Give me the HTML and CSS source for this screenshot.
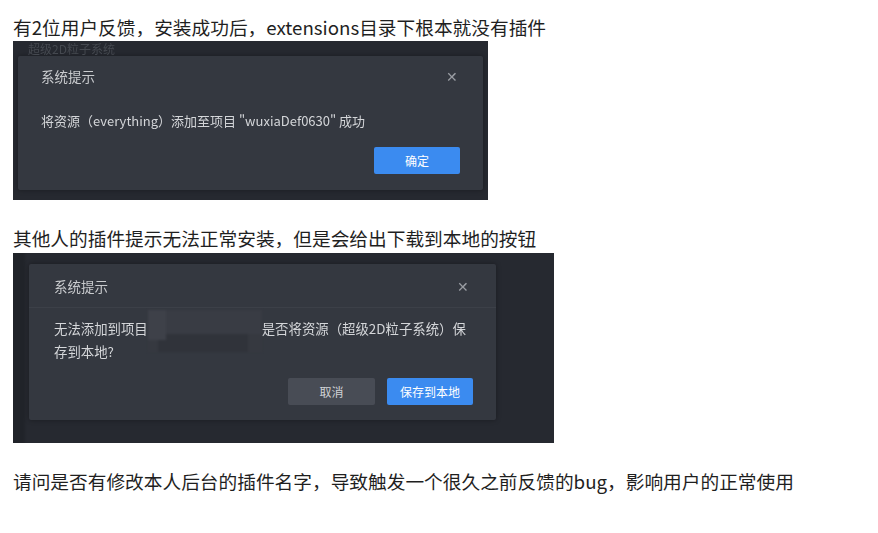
FILE: index.html
```html
<!DOCTYPE html>
<html lang="zh-CN">
<head>
  <meta charset="UTF-8">
  <title>插件反馈</title>
  <link rel="stylesheet" href="styles.css">
</head>
<body>
  <p class="line">有2位用户反馈，安装成功后，extensions目录下根本就没有插件</p>

  <div class="shot shot-one">
    <div class="behind">超级2D粒子系统</div>
    <div class="dialog dialog-one">
      <div class="dlg-head">
        <span class="dlg-title">系统提示</span>
        <span class="dlg-close">✕</span>
      </div>
      <div class="dlg-body">将资源（everything）添加至项目 "wuxiaDef0630" 成功</div>
      <div class="dlg-foot">
        <button class="btn btn-primary">确定</button>
      </div>
    </div>
  </div>

  <p class="line gap">其他人的插件提示无法正常安装，但是会给出下载到本地的按钮</p>

  <div class="shot shot-two">
    <div class="dialog dialog-two">
      <div class="dlg-head">
        <span class="dlg-title">系统提示</span>
        <span class="dlg-close">✕</span>
      </div>
      <div class="dlg-body">无法添加到项目<span class="mosaic"></span>是否将资源（超级2D粒子系统）保<br>存到本地?</div>
      <div class="dlg-foot">
        <button class="btn btn-plain">取消</button>
        <button class="btn btn-primary">保存到本地</button>
      </div>
    </div>
  </div>

  <p class="line gap">请问是否有修改本人后台的插件名字，导致触发一个很久之前反馈的bug，影响用户的正常使用</p>
</body>
</html>
```

FILE: styles.css
```css
/* Page text */
body {
  margin: 0;
  padding: 15px 13px;
  background: #ffffff;
  color: #1f1f1f;
  font-family: "Noto Sans CJK SC", "Noto Sans", sans-serif;
}

.line {
  margin: 0;
  font-size: 18.7px;
  line-height: 24px;
}

.line.gap {
  margin-top: 26px;
}

/* Screenshot frames */
.shot {
  overflow: hidden;
  background: #262930;
  font-family: "Noto Sans CJK SC", "Noto Sans", sans-serif;
}

.shot-one {
  width: 475px;
  height: 159px;
  margin-top: 2px;
  padding: 0 5px;
  box-sizing: border-box;
}

.shot-two {
  width: 541px;
  height: 190px;
  margin-top: 3px;
  padding: 11px 0 0 16px;
  box-sizing: border-box;
  background: linear-gradient(90deg, #202329 0, #202329 10px, #262930 14px);
}

.behind {
  height: 15px;
  margin-left: 10px;
  font-size: 12px;
  line-height: 15px;
  overflow: hidden;
  color: #454950;
  filter: blur(0.7px);
}

/* Dialog */
.dialog {
  background: #343840;
  color: #d4d6d9;
  box-shadow: 0 0 5px rgba(0, 0, 0, 0.35);
  border-radius: 2px;
}

.dialog-one {
  width: 465px;
  height: 134px;
}

.dialog-two {
  width: 467px;
  height: 156px;
}

.dlg-head {
  display: flex;
  justify-content: space-between;
  align-items: center;
  height: 40px;
  padding: 0 25px 0 23px;
}

.dialog-two .dlg-head {
  height: 43px;
  padding: 0 27px 0 25px;
  border-bottom: 1px solid #3c4048;
}

.dlg-title {
  font-size: 13.5px;
  color: #c9cbce;
  filter: blur(0.3px);
}

.dlg-close {
  font-size: 14px;
  color: #9a9da3;
  filter: blur(0.3px);
}

.dlg-body {
  height: 50px;
  padding: 0 23px;
  font-size: 13px;
  line-height: 50px;
  filter: blur(0.3px);
}

.dialog-two .dlg-body {
  height: auto;
  padding: 10px 25px 16px;
  font-size: 13.4px;
  line-height: 21px;
}

.mosaic {
  display: inline-block;
  width: 114px;
  height: 42px;
  margin: -10px 0 -11px;
  vertical-align: middle;
  background:
    linear-gradient(#3e4149, #3e4149) 0 0 / 18px 30px no-repeat,
    linear-gradient(#30333a, #30333a) 10px 24px / 90px 18px no-repeat,
    linear-gradient(#393c44, #393c44) 18px 0 / 96px 24px no-repeat,
    #363940;
  filter: blur(1px);
}

.dlg-foot {
  display: flex;
  justify-content: flex-end;
  gap: 12px;
  padding: 1px 23px 0;
}

.dialog-two .dlg-foot {
  padding-top: 0;
}

/* Buttons */
.btn {
  width: 86px;
  height: 27px;
  border: none;
  border-radius: 2px;
  font-family: "Noto Sans CJK SC", sans-serif;
  font-size: 12px;
  color: #ffffff;
  cursor: pointer;
}

.btn-primary {
  background: #3b8bf0;
}

.btn-plain {
  width: 87px;
  background: #484c55;
  color: #d0d2d5;
}
```
